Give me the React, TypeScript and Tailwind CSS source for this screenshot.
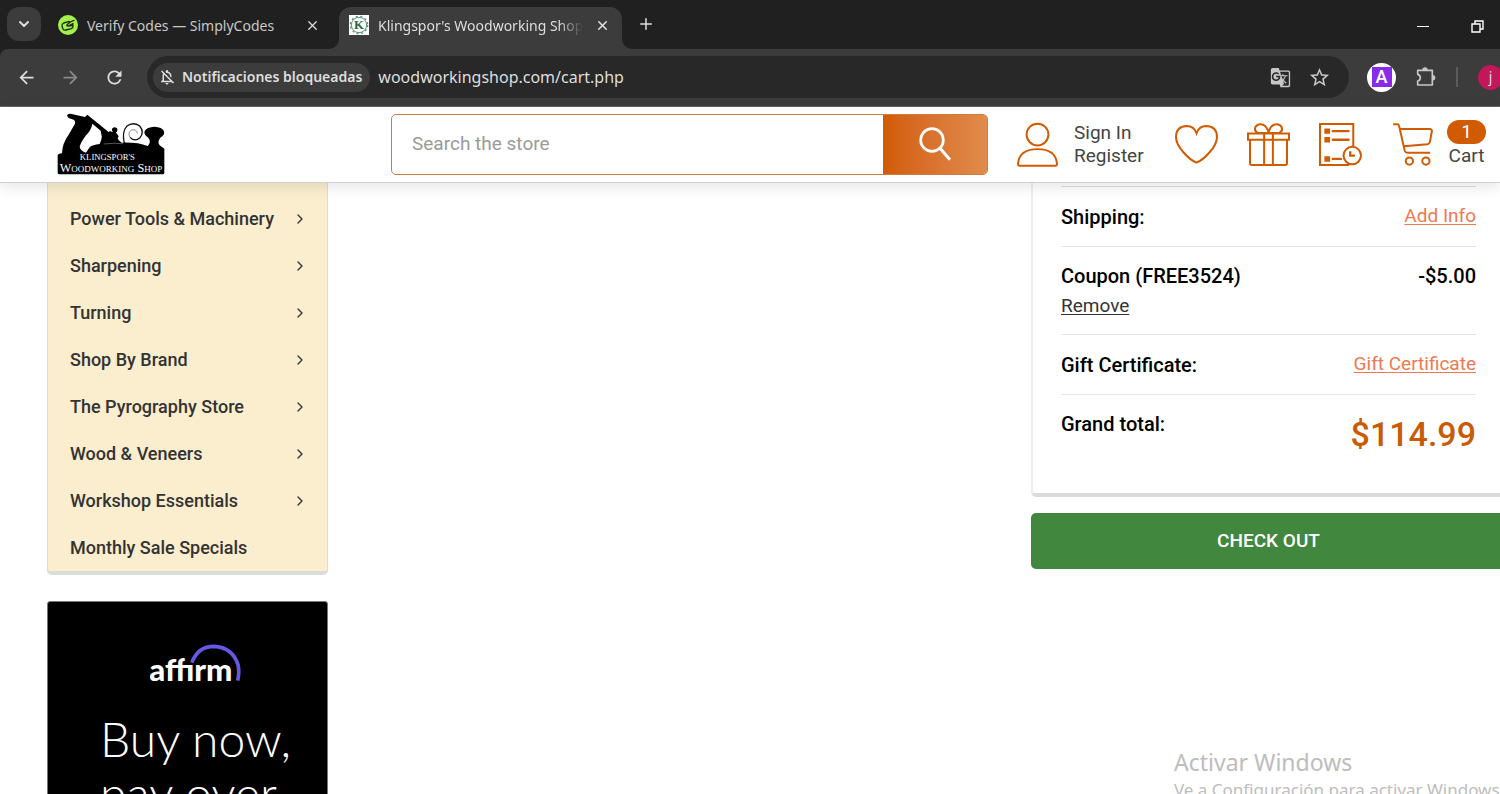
import { useState } from "react";
import {
  MdArrowBack,
  MdArrowForward,
  MdGTranslate,
  MdOutlineNotificationsOff,
  MdRefresh,
  MdStarBorder,
} from "react-icons/md";
import { ChevronDown, ChevronRight, Plus, X } from "lucide-react";

const categories = [
  { name: "Power Tools & Machinery", hasChildren: true },
  { name: "Sharpening", hasChildren: true },
  { name: "Turning", hasChildren: true },
  { name: "Shop By Brand", hasChildren: true },
  { name: "The Pyrography Store", hasChildren: true },
  { name: "Wood & Veneers", hasChildren: true },
  { name: "Workshop Essentials", hasChildren: true },
  { name: "Monthly Sale Specials", hasChildren: false },
];

function SimplyCodesIcon() {
  return (
    <svg viewBox="0 0 60 60" className="size-5 shrink-0" aria-hidden="true">
      <circle cx="30" cy="30" r="30" fill="#a5f04c" />
      <path
        d="M34 19 L17 24 Q11 27 12 33 L15 42 Q18 47 24 45 L40 41 Q46 38 45 31 L44 27 M48 16 L37 21 L27 29 Q25 34 31 33 L45 26 M31 33 L44 31"
        fill="none"
        stroke="#1c2a12"
        strokeWidth="4"
        strokeLinecap="round"
        strokeLinejoin="round"
      />
    </svg>
  );
}

function KlingsporFavicon() {
  return (
    <svg viewBox="0 0 60 60" className="size-5 shrink-0" aria-hidden="true">
      <rect width="60" height="60" fill="#fff" />
      <circle cx="30" cy="30" r="23" fill="none" stroke="#5b9279" strokeWidth="3" />
      <circle cx="30" cy="30" r="26" fill="none" stroke="#5b9279" strokeWidth="4" strokeDasharray="6 8" />
      <text x="30" y="43" textAnchor="middle" fontSize="38" fontWeight="700" fontFamily="Liberation Serif, serif" fill="#236647">
        K
      </text>
    </svg>
  );
}

function PuzzleIcon() {
  return (
    <svg viewBox="0 0 60 60" className="size-5" aria-hidden="true">
      <path
        d="M5 10 H49 V54 H5 V42 Q13 40 13 32 Q13 24 5 22 Z"
        fill="none"
        stroke="#c7c7c7"
        strokeWidth="5"
        strokeLinejoin="round"
      />
      <path d="M19 9 a8 8 0 0 1 16 0 z M50 24 a8 8 0 0 1 0 16 z" fill="#c7c7c7" />
    </svg>
  );
}

function StoreLogo() {
  return (
    <svg viewBox="50 25 324 186" className="h-[62px] w-[108px]" role="img" aria-label="Klingspor's Woodworking Shop">
      <path d="M80 32 Q83 26 94 28 L134 37 L141 30 L152 39 L180 62 L244 114 Q290 112 322 124 Q334 112 324 99 Q309 90 313 79 Q320 67 342 66 Q366 67 371 80 Q374 92 360 99 Q350 112 358 122 L372 132 V204 Q372 209 367 209 H57 Q52 209 52 204 V152 Q53 147 65 146 Q66 116 84 92 L104 57 Q107 46 94 43 Q82 41 80 32 Z" />
      <path d="M156 57 L181 78 Q190 92 178 118 Q156 120 148 128 L137 144 Q120 138 118 126 Q121 114 137 92 Q153 76 156 57 Z" fill="#fff" />
      <path d="M181 78 L190 118 H244 L205 84 Z" />
      <path d="M203 89 L208 79 L218 83 Q212 75 217 70 Q223 65 230 71 Q234 78 227 84 L235 94 L232 102 L238 110 Z" />
      <path d="M190 118 Q222 114 248 117" fill="none" stroke="#fff" strokeWidth="1" />
      <path
        d="M252 116 Q244 82 259 65 Q278 50 298 64 Q313 82 299 99 Q283 113 269 98"
        fill="none"
        stroke="#111"
        strokeWidth="4"
      />
      <path d="M269 98 Q261 83 274 76 Q289 72 291 87" fill="none" stroke="#555" strokeWidth="2" />
      <text x="201" y="167" textAnchor="middle" fontSize="26" fontFamily="Liberation Serif, serif" fill="#fff">
        KLINGSPOR'S
      </text>
      <text x="212" y="201" textAnchor="middle" fontSize="37" fontFamily="Liberation Serif, serif" fill="#fff">
        W<tspan fontSize="27">OODWORKING</tspan> S<tspan fontSize="27">HOP</tspan>
      </text>
    </svg>
  );
}

function UserIcon() {
  return (
    <svg viewBox="0 0 124 134" className="h-[45px] w-[41px]" fill="none" stroke="#d15b00" strokeWidth="6" aria-hidden="true">
      <circle cx="62" cy="37" r="33" />
      <path d="M8 131 Q3 131 3 125 Q7 81 62 81 Q117 81 121 125 Q121 131 116 131 Z" />
    </svg>
  );
}

function HeartIcon() {
  return (
    <svg viewBox="0 0 128 116" className="h-[39px] w-[43px]" fill="none" stroke="#d15b00" strokeWidth="6" aria-hidden="true">
      <path d="M64 112 Q46 105 25 81 Q3 57 3 36 Q3 4 35 3 Q57 4 64 24 Q71 4 93 3 Q125 4 125 36 Q125 57 103 81 Q82 105 64 112 Z" />
    </svg>
  );
}

function GiftIcon() {
  return (
    <svg viewBox="0 0 128 128" className="size-[43px]" fill="none" stroke="#d15b00" strokeWidth="6" aria-hidden="true">
      <path d="M3 31 H125 V50 H3 Z M9 50 V120 Q9 125 14 125 H114 Q119 125 119 120 V50 M51 31 V125 M77 31 V125" />
      <path d="M64 30 H33 Q20 24 25 12 Q33 0 48 5 Q61 12 64 30 Q67 12 80 5 Q95 0 103 12 Q108 24 95 30 Z" />
    </svg>
  );
}

function OrdersIcon() {
  return (
    <svg viewBox="0 0 128 128" className="size-[43px]" fill="none" stroke="#d15b00" strokeWidth="6" aria-hidden="true">
      <path d="M102 70 V3 H3 V125 H90" />
      <path d="M41 24 H88 M41 50 H88 M41 107 H65" strokeWidth="7" strokeLinecap="round" />
      <path d="M16 16 h17 v16 h-17 z M16 42 h17 v16 h-17 z M16 99 h17 v16 h-17 z" fill="#d15b00" stroke="none" />
      <circle cx="99" cy="97" r="26" fill="#fff" />
      <path d="M93 84 V97 H107" strokeWidth="7" />
    </svg>
  );
}

function CartIcon() {
  return (
    <svg viewBox="0 0 120 130" className="h-[43px] w-10" fill="none" stroke="#d15b00" strokeWidth="6" aria-hidden="true">
      <path d="M0 4 H12 Q17 4 18 9 L35 84 Q37 90 43 90 H112 M21 18 H112 Q118 19 117 25 L111 58 Q110 63 104 64 L32 70" />
      <circle cx="49" cy="115" r="11" />
      <circle cx="99" cy="115" r="11" />
    </svg>
  );
}

function AffirmLogo() {
  return (
    <svg viewBox="330 340 274 114" className="h-[38px] w-[91px]" role="img" aria-label="affirm">
      <path d="M456 396 Q474 347 523 347 Q578 350 595 402 Q600 425 594 450" fill="none" stroke="#6658e4" strokeWidth="11" />
      <text x="328" y="450" fontSize="94" fontWeight="900" fontFamily="Lato, sans-serif" fill="#fff">
        affırm
      </text>
    </svg>
  );
}

function BrowserChrome() {
  return (
    <div className="shrink-0 bg-[#202020] font-['Noto_Sans','Open_Sans',sans-serif] text-[#dedede]">
      <div className="flex h-[49px] items-end">
        <button aria-label="Search tabs" className="mb-2 ml-[7px] grid size-[34px] place-items-center rounded-xl bg-[#3c3c3c]">
          <ChevronDown size={16} strokeWidth={3} />
        </button>
        <div className="ml-4 flex h-[42px] w-[282px] items-center px-px pb-1.5">
          <SimplyCodesIcon />
          <span className="ml-[9px] flex-1 text-[14px] whitespace-nowrap text-[#c8c8c8]">Verify Codes — SimplyCodes</span>
          <button aria-label="Close tab" className="mr-[18px]">
            <X size={15} strokeWidth={2} />
          </button>
        </div>
        <div className="relative flex h-[42px] w-[283px] items-center rounded-t-xl bg-[#3c3c3c] pr-3 pb-1.5 pl-[10px]">
          <svg viewBox="0 0 10 10" className="absolute bottom-0 -left-[10px] size-[10px]" aria-hidden="true">
            <path d="M10 0 V10 H0 A10 10 0 0 0 10 0" fill="#3c3c3c" />
          </svg>
          <svg viewBox="0 0 10 10" className="absolute -right-[10px] bottom-0 size-[10px]" aria-hidden="true">
            <path d="M0 0 V10 H10 A10 10 0 0 1 0 0" fill="#3c3c3c" />
          </svg>
          <KlingsporFavicon />
          <span className="ml-[9px] mask-r-from-88% text-[14px] whitespace-nowrap">
            Klingspor's Woodworking Shop
          </span>
          <button aria-label="Close tab" className="ml-auto">
            <X size={15} strokeWidth={2.5} />
          </button>
        </div>
        <button aria-label="New tab" className="mb-4 ml-[15px]">
          <Plus size={18} />
        </button>
        <div className="mb-4 ml-auto flex items-center gap-[42px] pr-4">
          <button aria-label="Minimize" className="grid h-3 w-3 place-items-center">
            <svg viewBox="0 0 12 12" className="size-3" aria-hidden="true">
              <path d="M0 5.5 H12" stroke="#fff" />
            </svg>
          </button>
          <button aria-label="Restore">
            <svg viewBox="0 0 13 13" className="size-[13px]" fill="none" stroke="#fff" strokeWidth="1.4" aria-hidden="true">
              <path d="M1 4 H9 V12 H1 Z M4 4 V1 H12 V9 H9" />
            </svg>
          </button>
        </div>
      </div>

      <div className="flex h-[58px] items-center rounded-tl-lg border-b border-[#666] bg-[#3c3c3c] pb-px pl-4">
        <button aria-label="Back"><MdArrowBack size={21} /></button>
        <button aria-label="Forward" className="ml-[23px] text-[#8a8a8a]"><MdArrowForward size={21} /></button>
        <button aria-label="Reload" className="ml-[23px]"><MdRefresh size={21} /></button>
        <div className="ml-[22px] flex h-[42px] flex-1 items-center rounded-full bg-[#282828] pr-[18px] pl-[6px]">
          <button className="flex h-[29px] items-center gap-1.5 rounded-full bg-[#3c3c3c] pr-2 pl-[5px] text-sm font-semibold">
            <MdOutlineNotificationsOff size={18} />
            Notificaciones bloqueadas
          </button>
          <input
            aria-label="Address"
            defaultValue="woodworkingshop.com/cart.php"
            className="ml-2 min-w-0 flex-1 bg-transparent text-base outline-none"
          />
          <button aria-label="Translate" className="text-[#c7c7c7]"><MdGTranslate size={21} /></button>
          <button aria-label="Bookmark" className="ml-[17px] text-[#c7c7c7]"><MdStarBorder size={23} /></button>
        </div>
        <button className="ml-[18px] grid size-[29px] place-items-center rounded-full bg-white">
          <span className="grid size-5 place-items-center bg-[#8a2be8] font-[Roboto,sans-serif] text-lg leading-5 font-medium text-white">A</span>
        </button>
        <button aria-label="Extensions" className="ml-5"><PuzzleIcon /></button>
        <div className="ml-5 h-5 w-0.5 bg-[#5c5c5c]" />
        <button className="-mr-[3px] ml-5 size-[25px] rounded-full bg-[#c2185b] text-sm">j</button>
      </div>
    </div>
  );
}

function StoreHeader() {
  const [query, setQuery] = useState("");

  return (
    <header className="relative z-10 flex h-[76px] shrink-0 items-center border-b border-[#d0d0d0] bg-white pr-[14px] pb-px pl-[57px] shadow-[0_4px_14px_rgba(0,0,0,0.1)]">
      <a href="#home"><StoreLogo /></a>
      <form className="ml-[226px] flex h-[61px] flex-1 overflow-hidden rounded-[5px] border border-[#d27a3c]" onSubmit={(e) => e.preventDefault()}>
        <input
          aria-label="Search the store"
          value={query}
          onChange={(e) => setQuery(e.target.value)}
          placeholder="Search the store"
          className="min-w-0 flex-1 px-5 text-[19px] outline-none placeholder:text-[#9a9a9a]"
        />
        <button aria-label="Submit search" className="grid w-[104px] place-items-center bg-linear-to-r from-[#d15b00] to-[#e08c4c]">
          <svg viewBox="0 0 96 102" className="h-[34px] w-8" fill="none" stroke="#fff" strokeWidth="8" aria-hidden="true">
            <circle cx="39" cy="39" r="34" />
            <path d="M63 64 L93 98" strokeWidth="9" />
          </svg>
        </button>
      </form>
      <nav className="ml-[29px] flex items-center gap-[29px]">
        <div className="flex items-center gap-4">
          <UserIcon />
          <div className="flex w-[72px] flex-col text-[19px] leading-[23px] text-[#444]">
            <a href="#login" className="whitespace-nowrap">Sign In</a>
            <a href="#register" className="whitespace-nowrap">Register</a>
          </div>
        </div>
        <a href="#wishlist" aria-label="Wish list"><HeartIcon /></a>
        <a href="#gifts" aria-label="Gift certificates"><GiftIcon /></a>
        <a href="#orders" aria-label="Orders"><OrdersIcon /></a>
        <a href="#cart" className="flex items-center gap-[14px] pl-0.5">
          <CartIcon />
          <span className="flex flex-col items-center text-[19px] leading-6 text-[#444]">
            <span className="w-[39px] rounded-full bg-[#d15b00] text-center text-white">1</span>
            Cart
          </span>
        </a>
      </nav>
    </header>
  );
}

function Sidebar() {
  return (
    <aside className="w-[281px] shrink-0">
      <ul className="rounded-b-[5px] border-x border-b-4 border-[#dcdcd8] bg-[#faeecf] pt-3">
        {categories.map((category) => (
          <li key={category.name}>
            <a
              href="#category"
              className="flex h-[47px] items-center justify-between pr-[19px] pl-[22px] text-[18px] font-medium text-[#333]"
            >
              {category.name}
              {category.hasChildren && <ChevronRight size={16} strokeWidth={2} />}
            </a>
          </li>
        ))}
      </ul>
      <a
        href="#affirm"
        className="mt-[26px] flex h-[300px] flex-col items-center rounded-[3px] border border-[#777] bg-black pt-[42px] pl-4 font-[Lato,sans-serif] text-white"
      >
        <AffirmLogo />
        <span className="mt-[30px] text-[48px] leading-[54px] font-light">
          Buy now,
          <br />
          pay over
        </span>
      </a>
    </aside>
  );
}

function CartTotals() {
  const label = "text-[20px] font-medium text-black";
  const link = "text-[19px] text-[#ee7a52] underline underline-offset-2";

  return (
    <section className="-mr-[6px] w-[475px] shrink-0">
      <div className="rounded-b-[5px] border-x-2 border-b-4 border-x-[#eee] border-b-[#dcdcdc] px-7 pt-[3px] leading-[30px]">
        <dl className="border-t border-[#dedede]">
          <div className="flex h-[60px] items-center justify-between border-b border-[#e5e5e5]">
            <dt className={label}>Shipping:</dt>
            <dd><a href="#shipping" className={link}>Add Info</a></dd>
          </div>
          <div className="flex h-[88px] justify-between border-b border-[#e5e5e5] pt-[14px]">
            <dt className={label}>
              Coupon (FREE3524)
              <button className="block text-[19px] font-normal text-[#333] underline underline-offset-2">Remove</button>
            </dt>
            <dd className={label}>-$5.00</dd>
          </div>
          <div className="flex h-[60px] items-center justify-between border-b border-[#e5e5e5]">
            <dt className={label}>Gift Certificate:</dt>
            <dd><a href="#gift" className={link}>Gift Certificate</a></dd>
          </div>
          <div className="flex h-[98px] justify-between pt-[14px]">
            <dt className={label}>Grand total:</dt>
            <dd className="text-[34px] leading-[50px] font-medium text-[#c95b05]">$114.99</dd>
          </div>
        </dl>
      </div>
      <button className="mt-4 h-14 w-full rounded-[5px] bg-[#42873e] text-[19px] font-medium text-white">CHECK OUT</button>
    </section>
  );
}

export default function App() {
  return (
    <div className="relative flex h-screen flex-col overflow-hidden bg-white font-[Roboto,sans-serif]">
      <BrowserChrome />
      <StoreHeader />
      <main className="flex min-h-0 flex-1 items-start justify-between overflow-hidden pl-[47px]">
        <Sidebar />
        <CartTotals />
      </main>
      <div className="pointer-events-none absolute right-0 -bottom-2 z-20 w-[326px] font-['Noto_Sans','Open_Sans',sans-serif] whitespace-nowrap text-[#bdbdbd]">
        <p className="text-[23px] leading-8">Activar Windows</p>
        <p className="text-[17px] leading-6">Ve a Configuración para activar Windows</p>
      </div>
    </div>
  );
}
